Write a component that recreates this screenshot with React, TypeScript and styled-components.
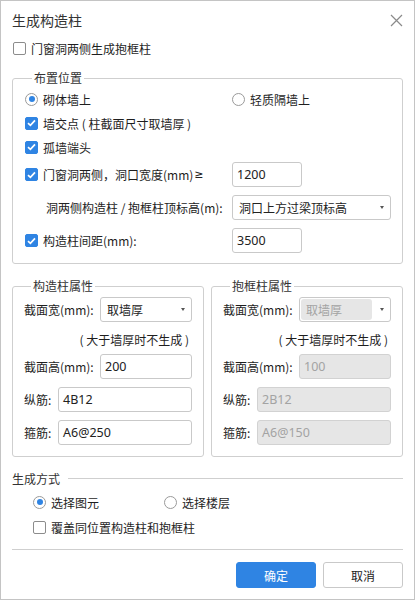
import * as React from 'react';
import styled, { createGlobalStyle } from 'styled-components';

const GlobalStyle = createGlobalStyle`
  html, body {
    margin: 0;
    padding: 0;
    background: #fff;
  }
  body {
    font-family: 'Noto Sans CJK SC', 'Noto Sans', sans-serif;
    font-size: 12px;
    color: #222;
  }
`;

const BLUE = '#2f84e3';

const Dialog = styled.div`
  width: 415px;
  height: 600px;
  box-sizing: border-box;
  border: 1px solid #c4c4c4;
  padding: 0 11px;
  display: flex;
  flex-direction: column;
  background: #fff;
`;

const Header = styled.div`
  height: 36px;
  display: flex;
  align-items: center;
  justify-content: space-between;
`;

const Title = styled.div`
  font-size: 14px;
  color: #333;
  margin-top: 1px;
`;

const CloseBtn = styled.div`
  width: 13px;
  height: 13px;
  margin-top: 2px;
  display: flex;
  color: #8a8a8a;
`;

const Row = styled.div<{ $h?: number; $mt?: number; $pl?: number }>`
  display: flex;
  align-items: center;
  height: ${p => p.$h ?? 22}px;
  margin-top: ${p => p.$mt ?? 0}px;
  padding-left: ${p => p.$pl ?? 0}px;
  white-space: pre;
`;

const GridRow = styled.div<{ $mt?: number }>`
  display: grid;
  grid-template-columns: 207px 1fr;
  align-items: center;
  margin-top: ${p => p.$mt ?? 0}px;
  white-space: pre;
`;

const Fieldset = styled.fieldset<{ $mt?: number; $pl?: number; $pb?: number }>`
  margin: ${p => p.$mt ?? 0}px 0 0 0;
  padding: 2px 11px ${p => p.$pb ?? 10}px ${p => p.$pl ?? 12}px;
  border: 1px solid #cfcfcf;
  border-radius: 3px;
  min-width: 0;
  box-sizing: border-box;
`;

const Legend = styled.legend`
  padding: 0 2px;
  margin-left: 7px;
  line-height: 16px;
  font-size: 12px;
  color: #333;
`;

const Columns = styled.div`
  display: grid;
  grid-template-columns: 192px 192px;
  column-gap: 7px;
  margin-top: 14px;
`;

const BoxMark = styled.span<{ $on?: boolean }>`
  width: 13px;
  height: 13px;
  box-sizing: border-box;
  border-radius: 2px;
  border: 1px solid ${p => (p.$on ? BLUE : '#8c8c8c')};
  background: ${p => (p.$on ? BLUE : '#fff')};
  display: inline-flex;
  align-items: center;
  justify-content: center;
  flex: none;
  margin-right: 5px;
`;

const RadioMark = styled.span<{ $on?: boolean }>`
  width: 13px;
  height: 13px;
  box-sizing: border-box;
  border-radius: 50%;
  border: 1px solid #9a9a9a;
  background: #fff;
  display: inline-flex;
  align-items: center;
  justify-content: center;
  flex: none;
  margin-right: 5px;
  &::after {
    content: '';
    width: 6px;
    height: 6px;
    border-radius: 50%;
    background: ${p => (p.$on ? BLUE : 'transparent')};
  }
`;

const Choice = styled.span`
  display: inline-flex;
  align-items: center;
  color: #1e1e1e;
`;

const Latin = styled.span`
  font-family: 'DejaVu Sans', 'Noto Sans', sans-serif;
  font-size: 11px;
  margin-left: 1px;
`;

const Input = styled.div<{ $w?: number; $disabled?: boolean }>`
  height: 25px;
  width: ${p => (p.$w ? `${p.$w}px` : 'auto')};
  flex: ${p => (p.$w ? 'none' : '1')};
  box-sizing: border-box;
  border: 1px solid ${p => (p.$disabled ? '#d2d2d2' : '#c9c9c9')};
  border-radius: 3px;
  background: ${p => (p.$disabled ? '#e6e6e6' : '#fff')};
  color: ${p => (p.$disabled ? '#a3a3a3' : '#222')};
  padding-left: 4px;
  display: flex;
  align-items: center;
  font-family: 'Noto Sans', 'Noto Sans CJK SC', sans-serif;
  font-size: 12.5px;
`;

const Select = styled.div<{ $w?: number }>`
  height: 25px;
  width: ${p => (p.$w ? `${p.$w}px` : 'auto')};
  flex: ${p => (p.$w ? 'none' : '1')};
  box-sizing: border-box;
  border: 1px solid #c9c9c9;
  border-radius: 3px;
  background: #fff;
  display: flex;
  align-items: center;
  padding: 0 6px 0 6px;
  color: #222;
`;

const SelectValue = styled.span<{ $disabled?: boolean }>`
  flex: 1;
  align-self: stretch;
  display: flex;
  align-items: center;
  color: ${p => (p.$disabled ? '#a3a3a3' : '#222')};
  background: ${p => (p.$disabled ? '#e6e6e6' : 'transparent')};
  border-radius: 3px;
  margin: ${p => (p.$disabled ? '1px 8px 1px -5px' : '0')};
  padding-left: ${p => (p.$disabled ? '5px' : '0')};
`;

const Caret = styled.span`
  width: 0;
  height: 0;
  border-left: 2.5px solid transparent;
  border-right: 2.5px solid transparent;
  border-top: 3px solid #555;
  flex: none;
`;

const FieldLabel = styled.span<{ $w: number }>`
  width: ${p => p.$w}px;
  flex: none;
  color: #1e1e1e;
`;

const Hint = styled.div`
  height: 18px;
  margin: 8px 0 6px;
  display: flex;
  align-items: center;
  justify-content: flex-end;
  padding-right: 3px;
  color: #1e1e1e;
  white-space: pre;
`;

const SectionHead = styled.div`
  display: flex;
  align-items: center;
  height: 18px;
  margin-top: 12px;
  color: #333;
  &::after {
    content: '';
    flex: 1;
    height: 1px;
    background: #cfcfcf;
    margin-left: 8px;
  }
`;

const Spacer = styled.span<{ $w: number }>`
  width: ${p => p.$w}px;
  flex: none;
`;

const Divider = styled.div`
  height: 1px;
  background: #cfcfcf;
  margin-top: 11px;
`;

const Footer = styled.div`
  display: flex;
  justify-content: flex-end;
  gap: 7px;
  margin-top: 12px;
`;

const Button = styled.button<{ $primary?: boolean }>`
  width: 80px;
  height: 26px;
  border-radius: 3px;
  font-family: inherit;
  font-size: 12px;
  cursor: pointer;
  border: 1px solid ${p => (p.$primary ? BLUE : '#c9c9c9')};
  background: ${p => (p.$primary ? BLUE : '#fff')};
  color: ${p => (p.$primary ? '#fff' : '#222')};
`;

const Check = ({ on, children }: { on?: boolean; children: React.ReactNode }) => (
  <Choice>
    <BoxMark $on={on}>
      {on && (
        <svg width="9" height="8" viewBox="0 0 9 8">
          <path d="M1 4.2 L3.4 6.4 L8 1.4" fill="none" stroke="#fff" strokeWidth="1.7" />
        </svg>
      )}
    </BoxMark>
    {children}
  </Choice>
);

const Radio = ({ on, children }: { on?: boolean; children: React.ReactNode }) => (
  <Choice>
    <RadioMark $on={on} />
    {children}
  </Choice>
);

export default function App() {
  return (
    <>
      <GlobalStyle />
      <Dialog>
        <Header>
          <Title>生成构造柱</Title>
          <CloseBtn>
            <svg width="13" height="13" viewBox="0 0 13 13">
              <path d="M1 1 L12 12 M12 1 L1 12" stroke="currentColor" strokeWidth="1.2" />
            </svg>
          </CloseBtn>
        </Header>

        <Row $h={20} $mt={1} $pl={1}>
          <Check>门窗洞两侧生成抱框柱</Check>
        </Row>

        <Fieldset $mt={12}>
          <Legend>布置位置</Legend>
          <GridRow>
            <Row>
              <Radio on>砌体墙上</Radio>
            </Row>
            <Row>
              <Radio>轻质隔墙上</Radio>
            </Row>
          </GridRow>
          <Row $mt={2}>
            <Check on>墙交点 ( 柱截面尺寸取墙厚 )</Check>
          </Row>
          <Row $mt={2}>
            <Check on>孤墙端头</Check>
          </Row>
          <GridRow $mt={4}>
            <Check on>
              门窗洞两侧，洞口宽度(mm)<Latin>≥</Latin>
            </Check>
            <Input $w={70}>1200</Input>
          </GridRow>
          <GridRow $mt={8}>
            <Row $h={25} $pl={21}>洞两侧构造柱 / 抱框柱顶标高(m):</Row>
            <Select>
              <SelectValue>洞口上方过梁顶标高</SelectValue>
              <Caret />
            </Select>
          </GridRow>
          <GridRow $mt={8}>
            <Check on>构造柱间距(mm):</Check>
            <Input $w={70}>3500</Input>
          </GridRow>
        </Fieldset>

        <Columns>
          <Fieldset $pl={11} $pb={11}>
            <Legend>构造柱属性</Legend>
            <Row $h={25} $mt={1}>
              <FieldLabel $w={76}>截面宽(mm):</FieldLabel>
              <Select>
                <SelectValue>取墙厚</SelectValue>
                <Caret />
              </Select>
            </Row>
            <Hint>( 大于墙厚时不生成 )</Hint>
            <Row $h={25}>
              <FieldLabel $w={76}>截面高(mm):</FieldLabel>
              <Input>200</Input>
            </Row>
            <Row $h={25} $mt={8}>
              <FieldLabel $w={34}>纵筋:</FieldLabel>
              <Input>4B12</Input>
            </Row>
            <Row $h={25} $mt={8}>
              <FieldLabel $w={34}>箍筋:</FieldLabel>
              <Input>A6@250</Input>
            </Row>
          </Fieldset>

          <Fieldset $pl={11} $pb={11}>
            <Legend>抱框柱属性</Legend>
            <Row $h={25} $mt={1}>
              <FieldLabel $w={76}>截面宽(mm):</FieldLabel>
              <Select>
                <SelectValue $disabled>取墙厚</SelectValue>
                <Caret />
              </Select>
            </Row>
            <Hint>( 大于墙厚时不生成 )</Hint>
            <Row $h={25}>
              <FieldLabel $w={76}>截面高(mm):</FieldLabel>
              <Input $disabled>100</Input>
            </Row>
            <Row $h={25} $mt={8}>
              <FieldLabel $w={34}>纵筋:</FieldLabel>
              <Input $disabled>2B12</Input>
            </Row>
            <Row $h={25} $mt={8}>
              <FieldLabel $w={34}>箍筋:</FieldLabel>
              <Input $disabled>A6@150</Input>
            </Row>
          </Fieldset>
        </Columns>

        <SectionHead>生成方式</SectionHead>
        <Row $mt={4} $pl={21}>
          <Radio on>选择图元</Radio>
          <Spacer $w={65} />
          <Radio>选择楼层</Radio>
        </Row>
        <Row $mt={3} $pl={21}>
          <Check>覆盖同位置构造柱和抱框柱</Check>
        </Row>
        <Divider />
        <Footer>
          <Button $primary>确定</Button>
          <Button>取消</Button>
        </Footer>
      </Dialog>
    </>
  );
}
